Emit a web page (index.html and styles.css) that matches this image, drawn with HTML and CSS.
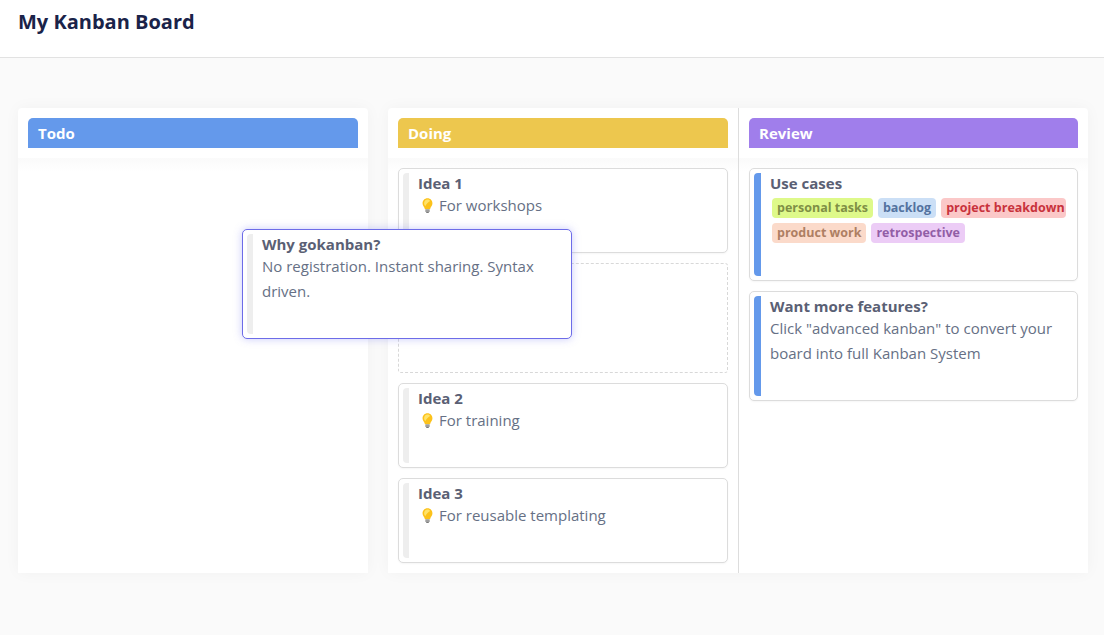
FILE: index.html
```html
<!DOCTYPE html>
<html lang="en">
<head>
<meta charset="utf-8">
<title>My Kanban Board</title>
<link rel="stylesheet" href="styles.css">
</head>
<body>
<svg class="defs" width="0" height="0" aria-hidden="true">
  <symbol id="bulb" viewBox="0 0 12 15" preserveAspectRatio="none">
    <path d="M6 .3C2.900.3.600 2.500.600 5.300c0 2.500 2 3.600 2.600 5.900h5.600c.6-2.300 2.600-3.400 2.600-5.900C11.400 2.500 9.100.3 6 .3z" fill="#fcc21b"/>
    <path d="M6 1.600C4 1.600 2.300 3.100 2.300 5.200c0 1.300.7 2.100 1.300 3C4.300 6.500 7 4 8.800 3 8.100 2.100 7.200 1.600 6 1.600z" fill="#ffe36a"/>
    <rect x="3.600" y="11.200" width="4.800" height="2.800" rx=".6" fill="#9e9e9e"/>
    <rect x="4.600" y="14" width="2.800" height="1" fill="#7a7a7a"/>
  </symbol>
</svg>
<header class="topbar"><h1 class="board-title">My Kanban Board</h1></header>
<main class="board">
  <section class="group group-todo">
    <div class="column">
      <div class="column-head"><h2 class="column-title title-blue">Todo</h2></div>
      <div class="column-body"></div>
    </div>
  </section>
  <section class="group group-split">
    <div class="column column-doing">
      <div class="column-head"><h2 class="column-title title-yellow">Doing</h2></div>
      <div class="column-body">
        <article class="card"><span class="strip"></span><div class="card-text"><h3>Idea 1</h3><p><svg class="bulb"><use href="#bulb"/></svg>For workshops</p></div></article>
        <div class="placeholder"></div>
        <article class="card"><span class="strip"></span><div class="card-text"><h3>Idea 2</h3><p><svg class="bulb"><use href="#bulb"/></svg>For training</p></div></article>
        <article class="card"><span class="strip"></span><div class="card-text"><h3>Idea 3</h3><p><svg class="bulb"><use href="#bulb"/></svg>For reusable templating</p></div></article>
      </div>
    </div>
    <div class="column column-review">
      <div class="column-head"><h2 class="column-title title-purple">Review</h2></div>
      <div class="column-body">
        <article class="card card-tags"><span class="strip strip-blue"></span><div class="card-text"><h3>Use cases</h3>
          <div class="tags">
            <span class="tag tag-green">personal tasks</span><span class="tag tag-blue">backlog</span><span class="tag tag-red">project breakdown</span><span class="tag tag-orange">product work</span><span class="tag tag-purple">retrospective</span>
          </div></div></article>
        <article class="card card-tall"><span class="strip strip-blue"></span><div class="card-text"><h3>Want more features?</h3><p>Click "advanced kanban" to convert your board into full Kanban System</p></div></article>
      </div>
    </div>
  </section>
</main>
<article class="card card-tall card-drag"><span class="strip"></span><div class="card-text"><h3>Why gokanban?</h3><p>No registration. Instant sharing. Syntax driven.</p></div></article>
</body>
</html>
```
FILE: styles.css
```css
* { box-sizing: border-box; }
html, body { margin: 0; height: 100%; }
body {
  background: #fafafa;
  font-family: "Open Sans", "Liberation Sans", sans-serif;
  color: #4b5563;
  position: relative;
  overflow: hidden;
}
.defs { position: absolute; }
.topbar {
  height: 58px;
  background: #fff;
  border-bottom: 1px solid #e2e2e2;
  padding: 8px 18px;
}
.board-title {
  margin: 0;
  font-size: 20px;
  line-height: 28px;
  font-weight: 700;
  color: #1a2349;
}
.board {
  display: flex;
  gap: 20px;
  padding: 50px 16px 0 18px;
}
.group {
  display: flex;
  height: 465px;
  background: #fff;
  border-radius: 4px;
  box-shadow: 0 0 16px rgba(0, 0, 0, .04);
}
.group-todo { width: 350px; }
.group-split { width: 700px; }
.column { width: 350px; display: flex; flex-direction: column; }
.column-doing { width: 351px; border-right: 1px solid #ddd; }
.column-review { width: 349px; }
.column-head { padding: 10px; height: 50px; }
.column-title {
  margin: 0;
  height: 30px;
  padding: 0 10px;
  border-radius: 5px 5px 0 0;
  font-size: 15px;
  line-height: 31px;
  font-weight: 700;
  color: #fff;
}
.title-blue { background: #6499eb; }
.title-yellow { background: #edc74e; }
.title-purple { background: #a07eeb; }
.column-body {
  flex: 1;
  padding: 10px;
  display: flex;
  flex-direction: column;
  gap: 10px;
  background: linear-gradient(#fafafa, #fff 14px);
}
.card {
  display: flex;
  flex: none;
  height: 85px;
  padding: 4px;
  background: #fff;
  border: 1px solid #dcdcdc;
  border-radius: 5px;
  box-shadow: 0 1px 2px rgba(0, 0, 0, .04);
}
.card-tags { height: 113px; }
.card-tall { height: 110px; }
.placeholder {
  flex: none;
  height: 110px;
  border: 1px dashed #d8d8d8;
  border-radius: 3px;
}
.strip {
  flex: none;
  width: 6px;
  background: #eee;
  border-radius: 4px 0 0 4px;
}
.strip-blue { width: 7px; background: #6499eb; }
.card-text { flex: 1; min-width: 0; padding-left: 9px; }
.card-text h3 {
  margin: 0;
  font-size: 15px;
  line-height: 20px;
  font-weight: 700;
  color: #5a6074;
}
.card-text p {
  margin: 0;
  font-size: 15px;
  line-height: 25px;
  color: #667085;
}
.bulb { width: 11px; height: 15px; margin: 0 6px 0 4px; vertical-align: -2px; }
.tags { display: flex; flex-wrap: wrap; gap: 5px; padding: 5px 2px 4px; }
.tag {
  height: 20px;
  padding: 0 5px;
  border-radius: 4px;
  font-size: 12.5px;
  line-height: 20px;
  font-weight: 700;
}
.tag-green { background: #def98a; color: #7f8f45; }
.tag-blue { background: #cbdff6; color: #53729f; }
.tag-red { background: #fbc8c8; color: #c8323c; padding-right: 1px; }
.tag-orange { background: #fbdaca; color: #ae7f63; }
.tag-purple { background: #ecccf6; color: #925ea6; }
.card-drag {
  position: absolute;
  left: 242px;
  top: 229px;
  width: 330px;
  border-color: #6d6ce8;
  box-shadow: 0 0 8px rgba(99, 102, 241, .35);
}
```
